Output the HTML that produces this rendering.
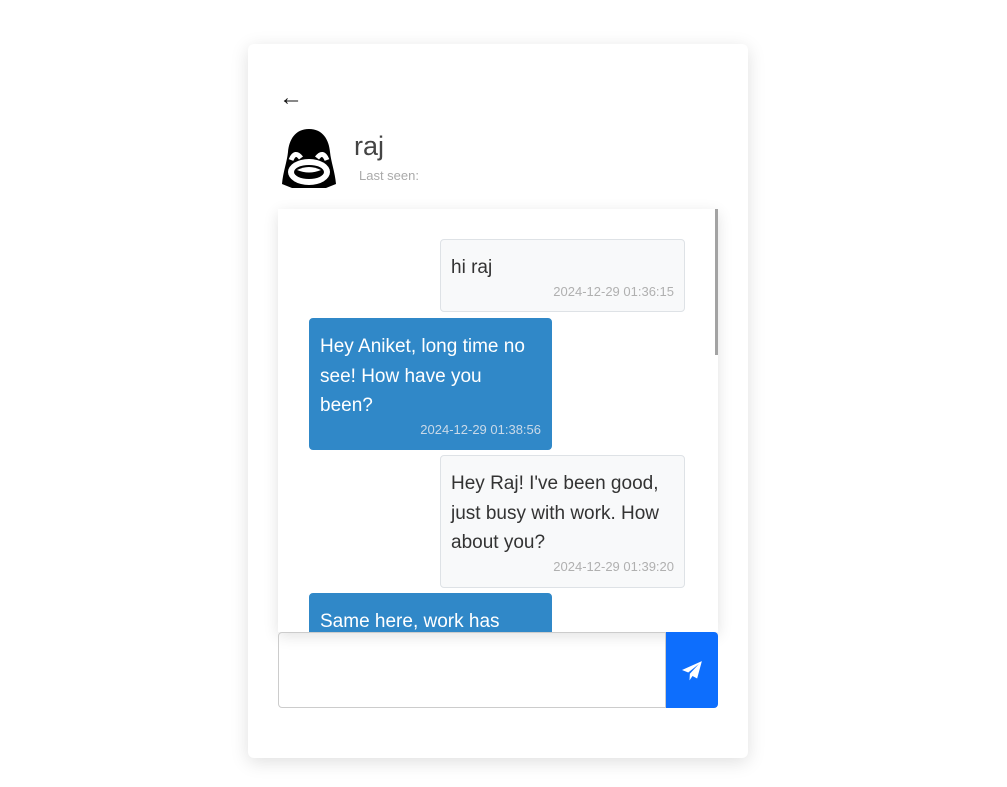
<!DOCTYPE html>
<html><head><style>
body{margin:0;background:#fff;font-family:"Liberation Sans",sans-serif;width:1007px;height:787px;overflow:hidden;position:relative}
.card{position:absolute;left:248px;top:44px;width:500px;height:714px;background:#fff;border-radius:6px;box-shadow:0 4px 18px rgba(0,0,0,.13)}
.back{position:absolute;left:279px;top:84px;font-size:24px;color:#111}
.name{position:absolute;left:354px;top:131px;font-size:27px;font-weight:300;color:#444}
.seen{position:absolute;left:359px;top:168px;font-size:13px;color:#aaa}
.chat{position:absolute;left:278px;top:209px;width:440px;height:423px;background:#fff;box-shadow:0 4px 14px rgba(0,0,0,.12);overflow:hidden}
.sb{position:absolute;left:715px;top:209px;width:3px;height:146px;background:#a3a3a3}
.b{position:absolute;box-sizing:border-box;padding:13px 10px 0 10px;border-radius:4px;font-size:19px;line-height:29.5px}
.r{background:#f8f9fa;border:1px solid #dee2e6;color:#333;left:162px;width:245px}
.l{background:#3088c8;border:1px solid #3088c8;color:#fff;left:31px;width:243px}
.t{display:block;text-align:right;font-size:13px;line-height:18px;color:#b0b0b0}
.l .t{color:#c9d9e8}
.inp{position:absolute;left:278px;top:632px;width:388px;height:76px;box-sizing:border-box;border:1px solid #ccc;border-radius:4px 0 0 4px}
.btn{position:absolute;left:666px;top:632px;width:52px;height:76px;background:#0d6efd;border-radius:0 4px 4px 0}
</style></head><body>
<div class="card"></div>
<div class="back">←</div>
<svg style="position:absolute;left:281px;top:128px" width="56" height="62" viewBox="0 0 56 62">
<path d="M28 1C14 1 8 12 7 24 6 34 2 44 1 56l10 4h34l10-4C54 44 50 34 49 24 48 12 42 1 28 1z" fill="#000"/>
<ellipse cx="28" cy="44" rx="21" ry="13" fill="#fff"/>
<ellipse cx="28" cy="44" rx="15" ry="7" fill="#000"/>
<path d="M16 42q12-6 24 0q-12 5-24 0z" fill="#fff"/>
<path d="M10 32q4-10 10-2M46 32q-4-10-10-2" stroke="#fff" stroke-width="5" fill="none"/>
</svg>
<div class="name">raj</div>
<div class="seen">Last seen:</div>
<div class="chat">
<div class="b r" style="top:30px;height:73px">hi raj<span class="t">2024-12-29 01:36:15</span></div>
<div class="b l" style="top:109px;height:132px">Hey Aniket, long time no<br>see! How have you<br>been?<span class="t">2024-12-29 01:38:56</span></div>
<div class="b r" style="top:246px;height:133px">Hey Raj! I've been good, just busy with work. How about you?<span class="t">2024-12-29 01:39:20</span></div>
<div class="b l" style="top:384px;height:80px">Same here, work has</div>
</div>
<div class="sb"></div>
<div class="inp"></div>
<div class="btn"><svg style="position:absolute;left:16px;top:29px" width="20" height="20" viewBox="0 0 16 16"><path d="M15.9.1 0 7.2l5 2 8.5-6.8L6.3 10.2l-.3 5.3 2.4-3.5 3.7 2z" fill="#fff"/></svg></div>
</body></html>
